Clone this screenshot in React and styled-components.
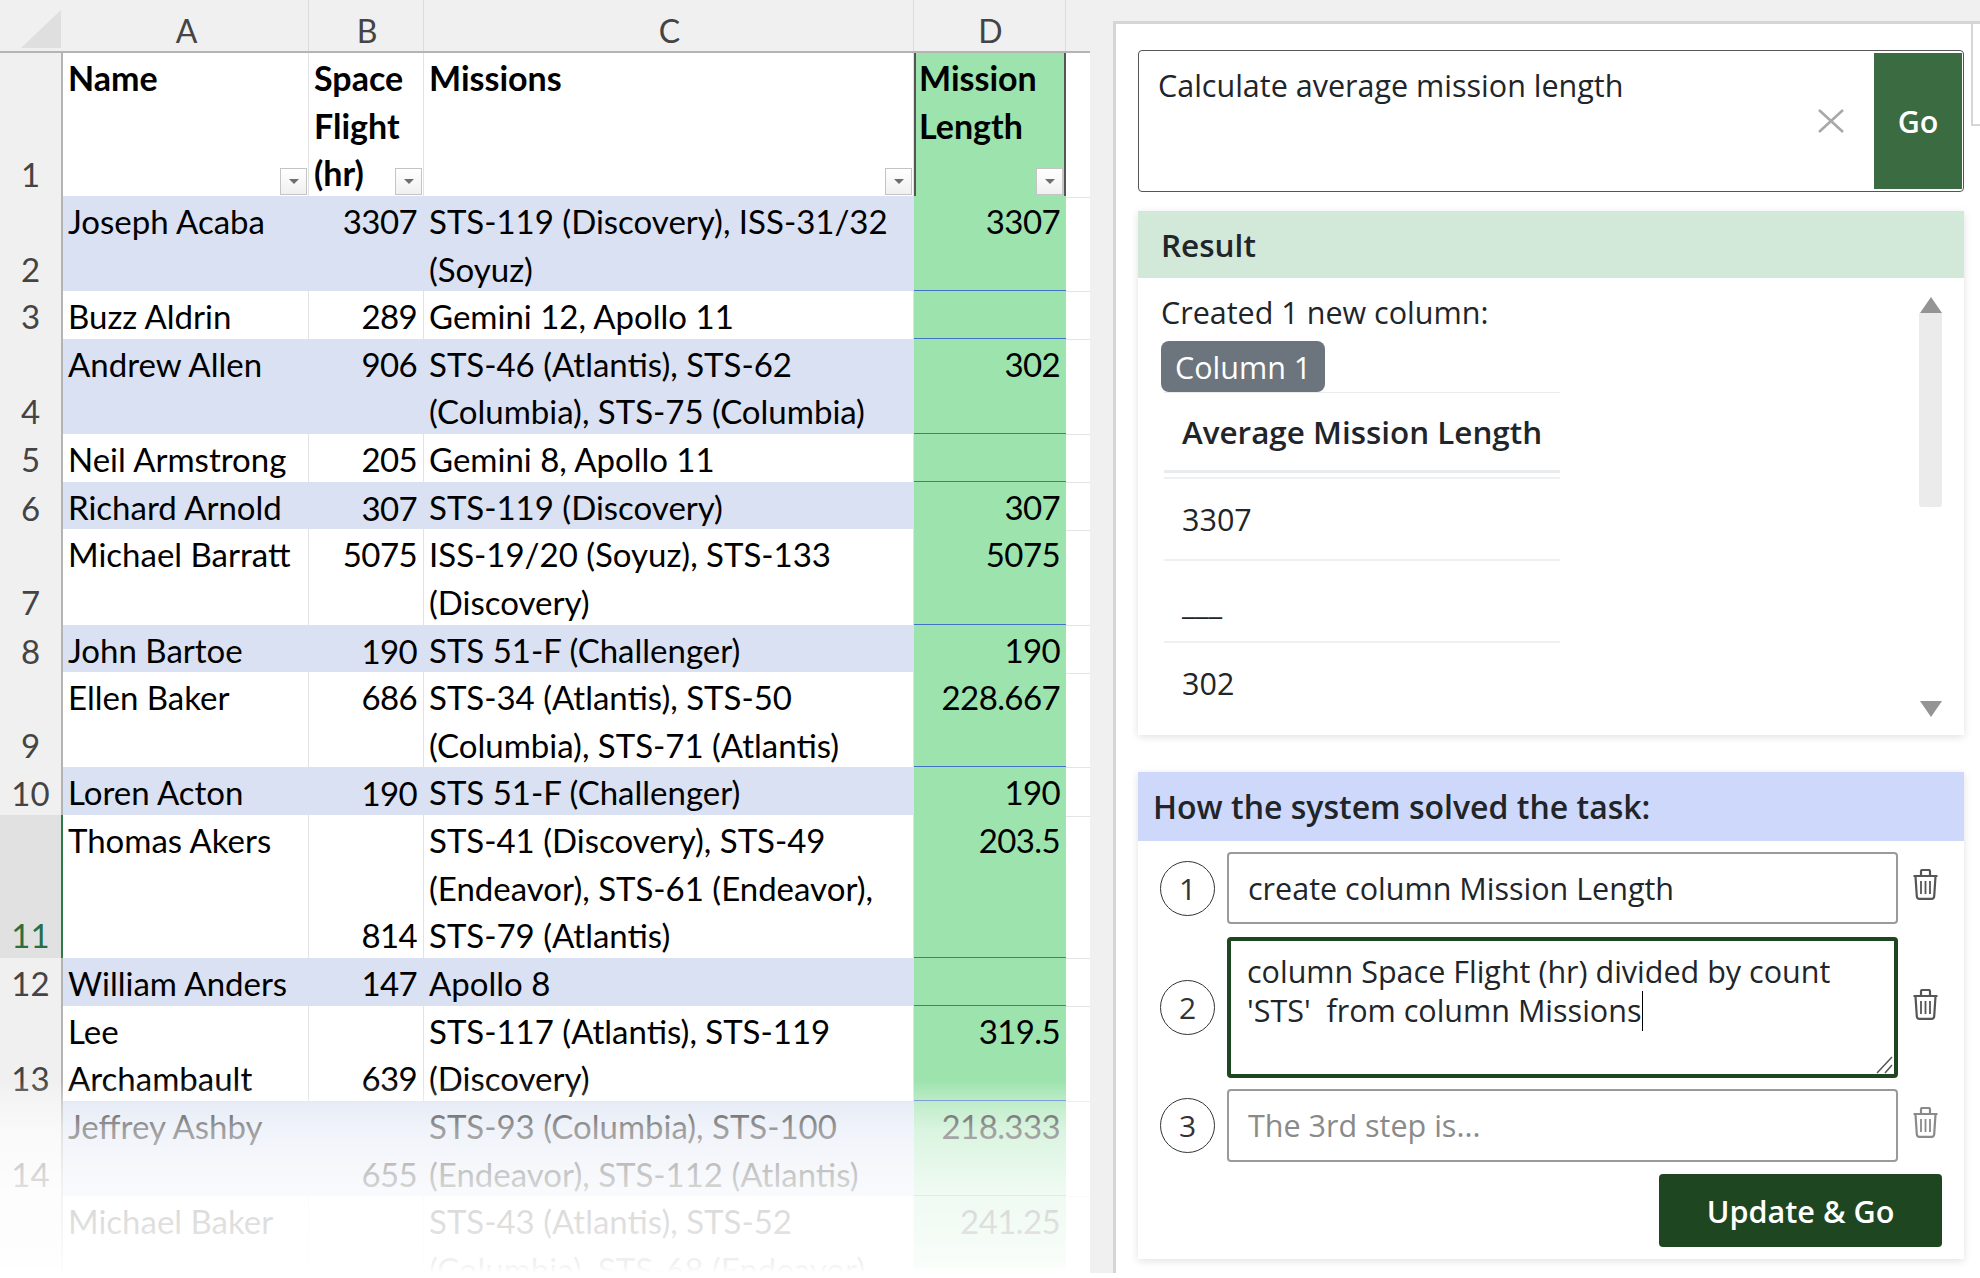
import React from 'react';
import styled, { createGlobalStyle } from 'styled-components';

const LINE = 47.64;

const GlobalStyle = createGlobalStyle`
  html, body {
    margin: 0;
    padding: 0;
    background: #fff;
  }
  * {
    box-sizing: border-box;
  }
`;

// Page: sheet on the left, task pane on the right
const Page = styled.div`
  display: flex;
  width: 1980px;
  height: 1273px;
  margin-bottom: 5px;
  background: #f0f0f0;
  overflow: hidden;
`;

const Sheet = styled.div`
  position: relative;
  width: 1090px;
  height: 100%;
  margin-right: 23px;
  flex-shrink: 0;
  background: #fff;
  overflow: hidden;
  font-family: 'Lato', 'Liberation Sans', sans-serif;
  font-size: 33px;
  color: #000;
`;

const Fade = styled.div`
  position: absolute;
  left: 0;
  right: 0;
  top: 1080px;
  bottom: 0;
  background: linear-gradient(
    to bottom,
    rgba(255, 255, 255, 0) 0,
    rgba(255, 255, 255, 0.38) 25px,
    rgba(255, 255, 255, 0.62) 50px,
    rgba(255, 255, 255, 0.84) 110px,
    rgba(255, 255, 255, 0.88) 150px,
    rgba(255, 255, 255, 0.95) 185px,
    #fff 193px
  );
`;

const SheetRow = styled.div`
  display: grid;
  grid-template-columns: 63px 246px 115px 490px 152px 24px;
`;

const ColumnHeaderRow = styled(SheetRow)`
  height: 53px;
  background: #f0f0f0;
  border-bottom: 2px solid #b4b4b4;
`;

const Corner = styled.div`
  display: flex;
  justify-content: flex-end;
  align-items: flex-end;
  padding: 0 2px 3px 0;
`;

const ColumnLetter = styled.div`
  display: flex;
  justify-content: center;
  align-items: center;
  padding: 10px 0 0 2px;
  color: #444;
  font-size: 32px;
  border-right: 1px solid ${({ $end }) => ($end ? 'transparent' : '#dcdcdc')};
`;

const RowNumber = styled.div`
  display: flex;
  flex-direction: column;
  align-items: center;
  justify-content: flex-end;
  font-size: 33px;
  color: ${({ $selected }) => ($selected ? '#2c6e3f' : '#444')};
  background: ${({ $selected }) => ($selected ? '#e1e1e1' : '#f0f0f0')};
  border-right: 2px solid ${({ $selected }) => ($selected ? '#2c7a45' : '#b4b4b4')};
  border-bottom: 1px solid ${({ $selected }) => ($selected ? '#b4b4b4' : '#e4e4e4')};
`;

// One text line of a cell, the taller line box sets the text a little low like Calibri
const TextLine = styled.div`
  height: ${LINE}px;
  line-height: ${LINE + 3}px;
`;

const Cell = styled.div`
  position: relative;
  display: flex;
  flex-direction: column;
  justify-content: ${({ $bottom }) => ($bottom ? 'flex-end' : 'flex-start')};
  text-align: ${({ $right }) => ($right ? 'right' : 'left')};
  letter-spacing: ${({ $right }) => ($right ? '-0.6px' : '0')};
  padding: 0 ${({ $right }) => ($right ? '6px' : '3px')} 0 5px;
  white-space: nowrap;
  font-weight: ${({ $head }) => ($head ? 700 : 400)};
  font-size: ${({ $head }) => ($head ? '34px' : 'inherit')};
  background: ${({ $stripe }) => ($stripe ? '#d9e1f2' : '#fff')};
  border-right: 1px solid ${({ $stripe }) => ($stripe ? '#d9e1f2' : '#e2e2e2')};
  border-bottom: 1px solid #d9e1f2;
  ${({ $head }) => $head && 'border-bottom: 2px solid #4472c4; border-right-color: #e2e2e2;'}
`;

const GreenCell = styled(Cell)`
  background: #9de3ad;
  border-right: 0;
  border-bottom: 2px solid #4472c4;
  ${({ $head }) => $head && 'padding-left: 3px; border-left: 2px solid #555; border-right: 2px solid #555;'}
`;

const Tail = styled.div`
  border-bottom: 1px solid #e4e4e4;
`;

const FilterButton = styled.div`
  position: absolute;
  right: 1px;
  bottom: 1px;
  width: 27px;
  height: 27px;
  display: flex;
  align-items: center;
  justify-content: center;
  background: linear-gradient(#fff, #f0f0f0);
  border: 1px solid #c4c4c4;
  &::after {
    content: '';
    border-left: 5px solid transparent;
    border-right: 5px solid transparent;
    border-top: 5px solid #6e6e6e;
  }
`;

// Task pane
const Pane = styled.div`
  flex: 1;
  margin-top: 21px;
  padding: 26px 16px 0 22px;
  background: #fff;
  border-top: 3px solid #d6d6d6;
  border-left: 3px solid #d6d6d6;
  position: relative;
  display: flex;
  flex-direction: column;
  font-family: 'Open Sans', 'Liberation Sans', sans-serif;
  font-size: 30.5px;
  color: #212529;
`;

const EdgeBox = styled.div`
  position: absolute;
  right: 0;
  top: 0;
  width: 9px;
  height: 102px;
  border: 2px solid #d6d6d6;
  border-right: 0;
  border-top: 0;
`;

const QueryBox = styled.div`
  display: flex;
  width: 826px;
  height: 142px;
  padding: 2px 1px 2px 2px;
  border: 1px solid #555;
  border-radius: 4px;
`;

const QueryText = styled.div`
  flex: 1;
  padding: 11px 0 0 17px;
  line-height: 42px;
`;

const ClearIcon = styled.div`
  display: flex;
  align-items: center;
  margin-right: 30px;
  color: #a8a8a8;
`;

const GoButton = styled.div`
  width: 88px;
  display: flex;
  align-items: center;
  justify-content: center;
  background: #3a6b41;
  color: #fff;
  font-weight: 600;
  padding-bottom: 1px;
`;

const Card = styled.div`
  width: 826px;
  margin-top: ${({ $top }) => $top}px;
  background: #fff;
  box-shadow: 0 2px 8px rgba(0, 0, 0, 0.12);
`;

const CardTitle = styled.div`
  display: flex;
  align-items: center;
  height: ${({ $h }) => $h}px;
  padding-left: ${({ $pad }) => $pad}px;
  background: ${({ $bg }) => $bg};
  font-weight: 600;
  font-size: ${({ $size }) => $size}px;
`;

const ResultBody = styled.div`
  position: relative;
  height: 457px;
  padding: 12px 0 0 23px;
`;

const CreatedLine = styled.div`
  line-height: 44px;
`;

const Badge = styled.div`
  width: fit-content;
  height: 51px;
  margin-top: 7px;
  padding: 0 14px;
  line-height: 53px;
  background: #6c757d;
  color: #fff;
  border-radius: 8px;
`;

const ResultTable = styled.div`
  width: 396px;
  margin-left: 3px;
  border-top: 1px solid #e9ecef;
`;

const ResultHead = styled.div`
  height: 80px;
  padding: 19px 0 0 18px;
  line-height: 40px;
  font-weight: 600;
  font-size: 31.4px;
  border-bottom: 3px solid #e9ecef;
`;

const ResultCell = styled.div`
  height: ${({ $h }) => $h}px;
  margin-top: ${({ $top }) => $top || 0}px;
  padding-left: 18px;
  display: flex;
  align-items: ${({ $end }) => ($end ? 'flex-end' : 'center')};
  padding-bottom: ${({ $end }) => ($end ? '18px' : '0')};
  border-top: 2px solid #eef0f2;
`;

const Scrollbar = styled.div`
  position: absolute;
  right: 22px;
  top: 19px;
  width: 23px;
  height: 420px;
  display: flex;
  flex-direction: column;
  align-items: center;
`;

const ScrollThumb = styled.div`
  width: 100%;
  height: 194px;
  background: #ebebeb;
  border-radius: 0 0 3px 3px;
`;

const ScrollArrow = styled.div`
  width: 0;
  height: 0;
  border-left: 11px solid transparent;
  border-right: 11px solid transparent;
  ${({ $down }) =>
    $down
      ? 'border-top: 16px solid #949494; margin-top: auto;'
      : 'border-bottom: 16px solid #949494;'}
`;

const StepsBody = styled.div`
  padding: 11px 22px 12px 22px;
  display: flex;
  flex-direction: column;
  font-size: 30.5px;
`;

const StepRow = styled.div`
  display: flex;
  align-items: center;
  margin-top: ${({ $top }) => $top || 0}px;
`;

const StepNumber = styled.div`
  width: 55px;
  height: 55px;
  flex-shrink: 0;
  border-radius: 50%;
  border: 1.5px solid #333;
  display: flex;
  align-items: center;
  justify-content: center;
  font-size: 30px;
  color: #333;
`;

const StepInput = styled.div`
  position: relative;
  width: 671px;
  height: ${({ $h }) => $h}px;
  margin-left: 12px;
  padding: ${({ $focus }) => ($focus ? '11px 0 0 16px' : '0 0 0 19px')};
  display: ${({ $focus }) => ($focus ? 'block' : 'flex')};
  align-items: center;
  line-height: 39px;
  border: ${({ $focus }) => ($focus ? '4px solid #1e4620' : '2px solid #9a9a9a')};
  border-radius: 4px;
  color: ${({ $muted }) => ($muted ? '#8a8a8a' : '#212529')};
`;

const Caret = styled.span`
  display: inline-block;
  width: 1px;
  height: 40px;
  margin-left: 1px;
  vertical-align: -9px;
  background: #000;
`;

const ResizeGrip = styled.svg`
  position: absolute;
  right: 0;
  bottom: 0;
`;

const TrashButton = styled.div`
  margin: -7px 0 0 14px;
  color: ${({ $muted }) => ($muted ? '#8a8a8a' : '#555')};
  display: flex;
`;

const ActionRow = styled.div`
  display: flex;
  justify-content: flex-end;
  margin-top: 12px;
`;

const UpdateButton = styled.div`
  width: 283px;
  height: 73px;
  display: flex;
  align-items: center;
  justify-content: center;
  background: #1e4620;
  color: #fff;
  font-weight: 600;
  font-size: 30.6px;
  border-radius: 4px;
`;

const TrashIcon = () => (
  <svg width="27" height="31" viewBox="0 0 27 31" fill="none" stroke="currentColor" strokeWidth="2.2">
    <path d="M1.5 7h24M9 6V2.4C9 1.6 9.6 1 10.4 1h6.2c.8 0 1.4.6 1.4 1.4V6" />
    <path d="M3.5 7.5l1.3 19.8c.1 1.6 1.3 2.6 2.8 2.6h11.8c1.5 0 2.7-1 2.8-2.6L23.5 7.5" />
    <path d="M9 12v13M13.5 12v13M18 12v13" strokeWidth="1.8" />
  </svg>
);

const columns = ['A', 'B', 'C', 'D'];

const rows = [
  { n: 2, name: ['Joseph Acaba'], hours: '3307', hoursTop: true, missions: ['STS-119 (Discovery), ISS-31/32', '(Soyuz)'], length: '3307' },
  { n: 3, name: ['Buzz Aldrin'], hours: '289', missions: ['Gemini 12, Apollo 11'], length: '' },
  { n: 4, name: ['Andrew Allen'], hours: '906', hoursTop: true, missions: ['STS-46 (Atlantis), STS-62', '(Columbia), STS-75 (Columbia)'], length: '302' },
  { n: 5, name: ['Neil Armstrong'], hours: '205', missions: ['Gemini 8, Apollo 11'], length: '' },
  { n: 6, name: ['Richard Arnold'], hours: '307', missions: ['STS-119 (Discovery)'], length: '307' },
  { n: 7, name: ['Michael Barratt'], hours: '5075', hoursTop: true, missions: ['ISS-19/20 (Soyuz), STS-133', '(Discovery)'], length: '5075' },
  { n: 8, name: ['John Bartoe'], hours: '190', missions: ['STS 51-F (Challenger)'], length: '190' },
  { n: 9, name: ['Ellen Baker'], hours: '686', hoursTop: true, missions: ['STS-34 (Atlantis), STS-50', '(Columbia), STS-71 (Atlantis)'], length: '228.667' },
  { n: 10, name: ['Loren Acton'], hours: '190', missions: ['STS 51-F (Challenger)'], length: '190' },
  { n: 11, name: ['Thomas Akers'], hours: '814', missions: ['STS-41 (Discovery), STS-49', '(Endeavor), STS-61 (Endeavor),', 'STS-79 (Atlantis)'], length: '203.5', selected: true },
  { n: 12, name: ['William Anders'], hours: '147', missions: ['Apollo 8'], length: '' },
  { n: 13, name: ['Lee', 'Archambault'], hours: '639', missions: ['STS-117 (Atlantis), STS-119', '(Discovery)'], length: '319.5' },
  { n: 14, name: ['Jeffrey Ashby'], hours: '655', missions: ['STS-93 (Columbia), STS-100', '(Endeavor), STS-112 (Atlantis)'], length: '218.333' },
  { n: 15, hideNumber: true, name: ['Michael Baker'], hours: '', missions: ['STS-43 (Atlantis), STS-52', '(Columbia), STS-68 (Endeavor)'], length: '241.25' },
];

const lines = (list) => list.map((text) => <TextLine key={text}>{text}</TextLine>);

const HeaderRow = () => (
  <SheetRow style={{ height: LINE * 3 }}>
    <RowNumber>
      <TextLine>1</TextLine>
    </RowNumber>
    <Cell $head>
      {lines(['Name'])}
      <FilterButton />
    </Cell>
    <Cell $head>
      {lines(['Space', 'Flight', '(hr)'])}
      <FilterButton />
    </Cell>
    <Cell $head>
      {lines(['Missions'])}
      <FilterButton />
    </Cell>
    <GreenCell $head>
      {lines(['Mission', 'Length'])}
      <FilterButton />
    </GreenCell>
    <Tail />
  </SheetRow>
);

const DataRow = ({ row }) => {
  const stripe = row.n % 2 === 0;
  return (
    <SheetRow style={{ height: LINE * Math.max(row.missions.length, row.name.length) }}>
      <RowNumber $selected={row.selected}>
        {!row.hideNumber && <TextLine>{row.n}</TextLine>}
      </RowNumber>
      <Cell $stripe={stripe}>{lines(row.name)}</Cell>
      <Cell $stripe={stripe} $right $bottom={!row.hoursTop}>
        {row.hours && lines([row.hours])}
      </Cell>
      <Cell $stripe={stripe}>{lines(row.missions)}</Cell>
      <GreenCell $right>{row.length && lines([row.length])}</GreenCell>
      <Tail />
    </SheetRow>
  );
};

const App = () => (
  <>
    <GlobalStyle />
    <Page>
      <Sheet>
        <ColumnHeaderRow>
          <Corner>
            <svg width="40" height="38" viewBox="0 0 40 38">
              <polygon points="0,38 40,0 40,38" fill="#dfdfdf" />
            </svg>
          </Corner>
          {columns.map((letter) => (
            <ColumnLetter key={letter}>{letter}</ColumnLetter>
          ))}
          <ColumnLetter $end />
        </ColumnHeaderRow>
        <HeaderRow />
        {rows.map((row) => (
          <DataRow key={row.n} row={row} />
        ))}
        <Fade />
      </Sheet>

      <Pane>
        <EdgeBox />
        <QueryBox>
          <QueryText>Calculate average mission length</QueryText>
          <ClearIcon>
            <svg width="26" height="24" viewBox="0 0 26 24" stroke="currentColor" strokeWidth="2.6">
              <path d="M1 1l24 22M25 1L1 23" />
            </svg>
          </ClearIcon>
          <GoButton>Go</GoButton>
        </QueryBox>

        <Card $top={19}>
          <CardTitle $h={67} $pad={23} $size={31.5} $bg="#d2e8d9">
            Result
          </CardTitle>
          <ResultBody>
            <CreatedLine>Created 1 new column:</CreatedLine>
            <Badge>Column 1</Badge>
            <ResultTable>
              <ResultHead>Average Mission Length</ResultHead>
              <ResultCell $h={82} $top={4}>3307</ResultCell>
              <ResultCell $h={82} $end>___</ResultCell>
              <ResultCell $h={82}>302</ResultCell>
            </ResultTable>
            <Scrollbar>
              <ScrollArrow />
              <ScrollThumb />
              <ScrollArrow $down />
            </Scrollbar>
          </ResultBody>
        </Card>

        <Card $top={37}>
          <CardTitle $h={69} $pad={15} $size={32} $bg="#cdd8fa">
            How the system solved the task:
          </CardTitle>
          <StepsBody>
            <StepRow>
              <StepNumber>1</StepNumber>
              <StepInput $h={72}>create column Mission Length</StepInput>
              <TrashButton><TrashIcon /></TrashButton>
            </StepRow>
            <StepRow $top={13}>
              <StepNumber>2</StepNumber>
              <StepInput $h={141} $focus>
                column Space Flight (hr) divided by count
                <br />
                'STS'&nbsp; from column Missions
                <Caret />
                <ResizeGrip width="20" height="20" viewBox="0 0 20 20" stroke="#555" strokeWidth="1.5">
                  <path d="M3 19L18 3M11 19l7-8" />
                </ResizeGrip>
              </StepInput>
              <TrashButton><TrashIcon /></TrashButton>
            </StepRow>
            <StepRow $top={11}>
              <StepNumber>3</StepNumber>
              <StepInput $h={73} $muted>The 3rd step is...</StepInput>
              <TrashButton $muted><TrashIcon /></TrashButton>
            </StepRow>
            <ActionRow>
              <UpdateButton>Update &amp; Go</UpdateButton>
            </ActionRow>
          </StepsBody>
        </Card>
      </Pane>
    </Page>
  </>
);

export default App;
